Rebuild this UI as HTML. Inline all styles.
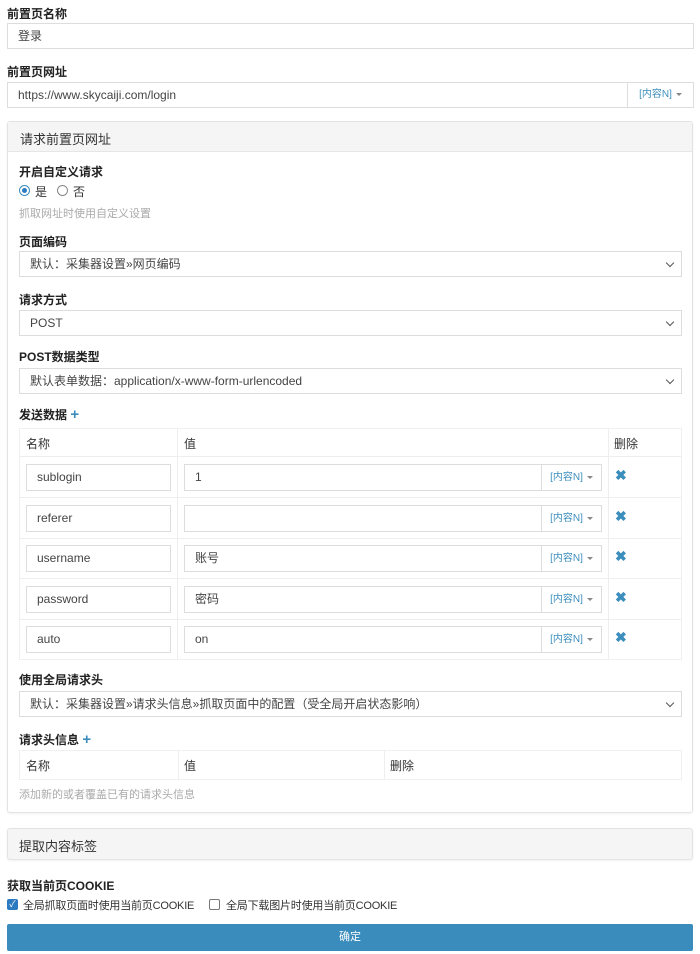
<!DOCTYPE html><html><head><meta charset="utf-8"><style>
*{box-sizing:border-box;margin:0;padding:0}
body{width:700px;height:954px;background:#fff;font-family:"Liberation Sans","Noto Sans CJK SC",sans-serif;font-size:12px;color:#333;position:relative;overflow:hidden}
.a{position:absolute}
.lb{font-weight:bold;font-size:12px;color:#222}
.in{position:absolute;border:1px solid #ddd;background:#fff;height:26px;line-height:24px;padding-left:10px;font-size:12px;color:#444}
.ad{position:absolute;border:1px solid #ddd;background:#fff;color:#3c8dbc;font-size:10px;text-align:center}
.sel::after{content:"";position:absolute;right:8px;top:8px;width:5px;height:5px;border-right:1.3px solid #555;border-bottom:1.3px solid #555;transform:rotate(45deg)}
.car{display:inline-block;border-left:3px solid transparent;border-right:3px solid transparent;border-top:3px solid #888;vertical-align:middle;margin-left:4px}
.x{position:absolute;color:#3c8dbc;font-weight:bold;font-size:14px}
.plus{color:#3c8dbc;font-weight:bold;font-size:15px}
.hint{color:#aaa;font-size:11px}
.line{position:absolute;background:#eee}
</style></head><body>
<div class="a lb" style="left:7px;top:5px">前置页名称</div>
<div class="in" style="left:7px;top:23px;width:687px">登录</div>
<div class="a lb" style="left:7px;top:63px">前置页网址</div>
<div class="in" style="left:7px;top:82px;width:621px">https://www.skycaiji.com/login</div>
<div class="ad" style="left:627px;top:82px;width:67px;height:26px;line-height:24px">[内容N]<span class="car"></span></div>

<div class="a" style="left:7px;top:121px;width:686px;height:692px;border:1px solid #e3e3e3;border-radius:3px;box-shadow:0 1px 2px rgba(0,0,0,.06)"></div>
<div class="a" style="left:8px;top:122px;width:684px;height:30px;background:#f5f5f5;border-bottom:1px solid #e6e6e6"></div>
<div class="a" style="left:20px;top:129px;font-size:13px;color:#333">请求前置页网址</div>

<div class="a lb" style="left:19px;top:163px">开启自定义请求</div>
<div class="a" style="left:19px;top:185px;width:11px;height:11px;border:1px solid #3c8dbc;border-radius:50%"><div style="margin:2px;width:5px;height:5px;background:#2c7ac0;border-radius:50%"></div></div>
<div class="a" style="left:35px;top:183px;font-size:12px">是</div>
<div class="a" style="left:57px;top:185px;width:11px;height:11px;border:1px solid #888;border-radius:50%"></div>
<div class="a" style="left:73px;top:183px;font-size:12px">否</div>
<div class="a hint" style="left:19px;top:205px">抓取网址时使用自定义设置</div>

<div class="a lb" style="left:19px;top:233px">页面编码</div>
<div class="in sel" style="left:19px;top:251px;width:663px">默认：采集器设置»网页编码</div>
<div class="a lb" style="left:19px;top:291px">请求方式</div>
<div class="in sel" style="left:19px;top:310px;width:663px">POST</div>
<div class="a lb" style="left:19px;top:348px">POST数据类型</div>
<div class="in sel" style="left:19px;top:368px;width:663px">默认表单数据：application/x-www-form-urlencoded</div>

<div class="a lb" style="left:19px;top:406px">发送数据 <span class="plus">+</span></div>
<div class="a" style="left:19px;top:428px;width:663px;height:232px;border:1px solid #f0f0f0"></div>
<div class="line" style="left:177px;top:428px;width:1px;height:232px"></div>
<div class="line" style="left:608px;top:428px;width:1px;height:232px"></div>
<div class="line" style="left:19px;top:456px;width:663px;height:1px"></div>
<div class="line" style="left:19px;top:497px;width:663px;height:1px"></div>
<div class="line" style="left:19px;top:538px;width:663px;height:1px"></div>
<div class="line" style="left:19px;top:578px;width:663px;height:1px"></div>
<div class="line" style="left:19px;top:619px;width:663px;height:1px"></div>
<div class="a" style="left:26px;top:435px">名称</div>
<div class="a" style="left:184px;top:435px">值</div>
<div class="a" style="left:614px;top:435px">删除</div>

<div class="in" style="left:26px;top:464px;width:145px;height:27px">sublogin</div>
<div class="in" style="left:184px;top:464px;width:358px;height:27px">1</div>
<div class="ad" style="left:541px;top:464px;width:61px;height:27px;line-height:25px">[内容N]<span class="car"></span></div>
<div class="x" style="left:615px;top:467px">✖</div>

<div class="in" style="left:26px;top:505px;width:145px;height:27px">referer</div>
<div class="in" style="left:184px;top:505px;width:358px;height:27px"></div>
<div class="ad" style="left:541px;top:505px;width:61px;height:27px;line-height:25px">[内容N]<span class="car"></span></div>
<div class="x" style="left:615px;top:508px">✖</div>

<div class="in" style="left:26px;top:545px;width:145px;height:27px">username</div>
<div class="in" style="left:184px;top:545px;width:358px;height:27px">账号</div>
<div class="ad" style="left:541px;top:545px;width:61px;height:27px;line-height:25px">[内容N]<span class="car"></span></div>
<div class="x" style="left:615px;top:548px">✖</div>

<div class="in" style="left:26px;top:586px;width:145px;height:27px">password</div>
<div class="in" style="left:184px;top:586px;width:358px;height:27px">密码</div>
<div class="ad" style="left:541px;top:586px;width:61px;height:27px;line-height:25px">[内容N]<span class="car"></span></div>
<div class="x" style="left:615px;top:589px">✖</div>

<div class="in" style="left:26px;top:626px;width:145px;height:27px">auto</div>
<div class="in" style="left:184px;top:626px;width:358px;height:27px">on</div>
<div class="ad" style="left:541px;top:626px;width:61px;height:27px;line-height:25px">[内容N]<span class="car"></span></div>
<div class="x" style="left:615px;top:629px">✖</div>

<div class="a lb" style="left:19px;top:671px">使用全局请求头</div>
<div class="in sel" style="left:19px;top:691px;width:663px">默认：采集器设置»请求头信息»抓取页面中的配置（受全局开启状态影响）</div>

<div class="a lb" style="left:19px;top:731px">请求头信息 <span class="plus">+</span></div>
<div class="a" style="left:19px;top:750px;width:663px;height:30px;border:1px solid #f0f0f0"></div>
<div class="line" style="left:178px;top:750px;width:1px;height:30px"></div>
<div class="line" style="left:384px;top:750px;width:1px;height:30px"></div>
<div class="a" style="left:26px;top:757px">名称</div>
<div class="a" style="left:184px;top:757px">值</div>
<div class="a" style="left:390px;top:757px">删除</div>
<div class="a hint" style="left:19px;top:786px">添加新的或者覆盖已有的请求头信息</div>

<div class="a" style="left:7px;top:828px;width:686px;height:32px;border:1px solid #e3e3e3;background:#f5f5f5;border-radius:3px;box-shadow:0 1px 2px rgba(0,0,0,.06)"></div>
<div class="a" style="left:19px;top:836px;font-size:13px">提取内容标签</div>

<div class="a lb" style="left:7px;top:877px">获取当前页COOKIE</div>
<div class="a" style="left:7px;top:899px;width:11px;height:11px;background:#2c7ac0;border-radius:2px;color:#fff;font-size:9px;line-height:11px;text-align:center">✓</div>
<div class="a" style="left:23px;top:897px;font-size:11px;letter-spacing:-0.2px">全局抓取页面时使用当前页COOKIE</div>
<div class="a" style="left:209px;top:899px;width:11px;height:11px;border:1px solid #777;border-radius:2px"></div>
<div class="a" style="left:226px;top:897px;font-size:11px;letter-spacing:-0.2px">全局下载图片时使用当前页COOKIE</div>

<div class="a" style="left:7px;top:924px;width:686px;height:27px;background:#3a8cbc;border-radius:2px;color:#fff;text-align:center;line-height:27px;font-size:11px">确定</div>
</body></html>
